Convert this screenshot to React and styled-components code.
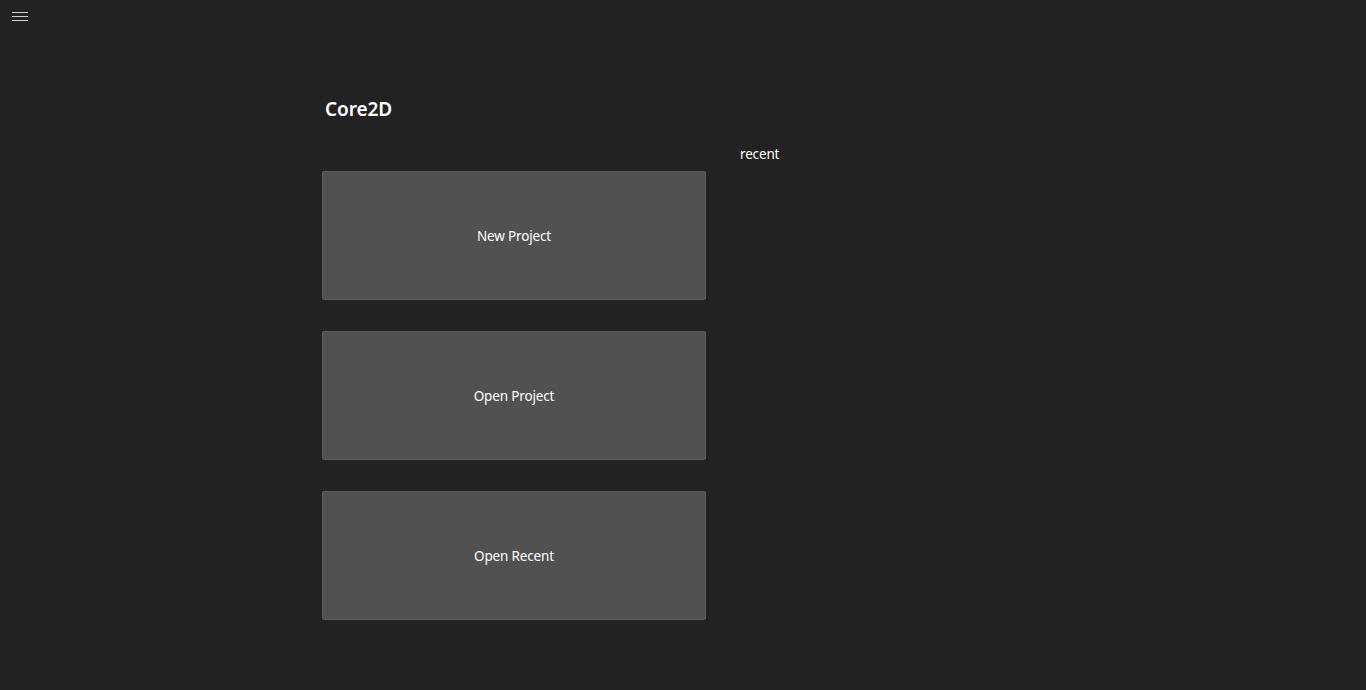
import React from 'react';
import styled, { createGlobalStyle } from 'styled-components';

const GlobalStyle = createGlobalStyle`
    html, body {
        margin: 0;
        padding: 0;
        background: #222222;
        font-family: "Noto Sans", "Open Sans", sans-serif;
        color: #ffffff;
    }
`;

const Page = styled.div`
    position: relative;
    width: 1366px;
    height: 690px;
    background: #222222;
    overflow: hidden;
`;

const MenuButton = styled.button`
    position: absolute;
    top: 5px;
    left: 6px;
    width: 28px;
    height: 22px;
    padding: 0;
    border: none;
    background: transparent;
    display: flex;
    flex-direction: column;
    align-items: center;
    justify-content: center;
    gap: 3px;
    cursor: pointer;

    span {
        display: block;
        width: 16px;
        height: 1px;
        background: #d0d0d0;
    }
`;

const Content = styled.div`
    display: flex;
    padding: 96px 0 0 322px;
    gap: 34px;
`;

const MainColumn = styled.div`
    display: flex;
    flex-direction: column;
    width: 384px;
`;

const Title = styled.h1`
    margin: 0 0 49px 3px;
    font-size: 19px;
    font-weight: 600;
    line-height: 26px;
    letter-spacing: -0.1px;
    color: #ffffff;
`;

const Actions = styled.div`
    display: flex;
    flex-direction: column;
    gap: 31px;
`;

const ActionButton = styled.button`
    width: 384px;
    height: 129px;
    padding: 0;
    background: #515151;
    border: 1px solid #5c5c5c;
    border-radius: 2px;
    color: #ffffff;
    font-family: "Noto Sans", "Open Sans", sans-serif;
    font-size: 13.5px;
    letter-spacing: -0.15px;
    cursor: pointer;

    &:hover {
        background: #5a5a5a;
    }
`;

const RecentColumn = styled.div`
    padding-top: 48px;
`;

const RecentLabel = styled.div`
    font-size: 13.5px;
    line-height: 20px;
    letter-spacing: -0.15px;
    color: #ffffff;
`;

function App() {
    const actions = ['New Project', 'Open Project', 'Open Recent'];

    return (
        <>
            <GlobalStyle />
            <Page>
                <MenuButton aria-label="menu">
                    <span />
                    <span />
                    <span />
                </MenuButton>
                <Content>
                    <MainColumn>
                        <Title>Core2D</Title>
                        <Actions>
                            {actions.map((label) => (
                                <ActionButton key={label}>{label}</ActionButton>
                            ))}
                        </Actions>
                    </MainColumn>
                    <RecentColumn>
                        <RecentLabel>recent</RecentLabel>
                    </RecentColumn>
                </Content>
            </Page>
        </>
    );
}

export default App;
